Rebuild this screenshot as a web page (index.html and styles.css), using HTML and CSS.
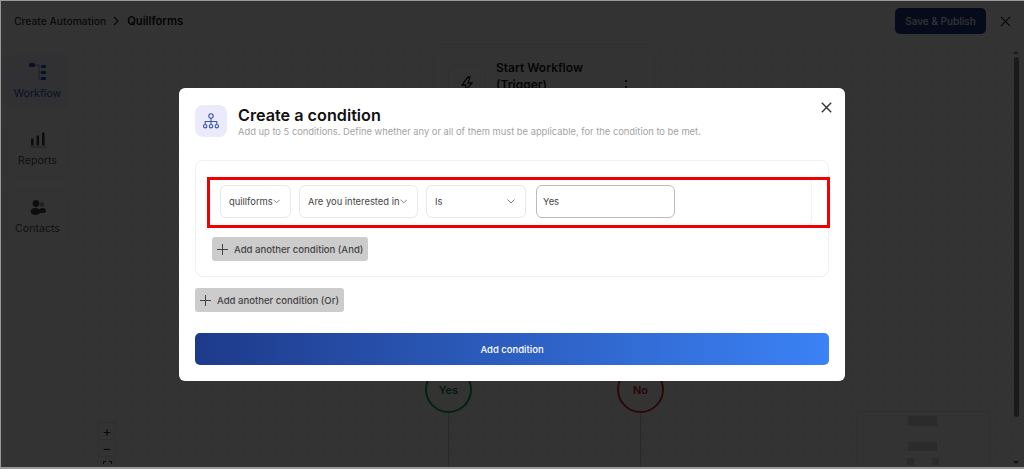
FILE: index.html
```html
<!DOCTYPE html>
<html lang="en">
<head>
    <meta charset="UTF-8">
    <meta name="viewport" content="width=device-width, initial-scale=1.0">
    <title>Create Automation</title>
    <link rel="stylesheet" href="styles.css">
</head>
<body>
    <div class="app">
        <header class="topbar">
            <div class="crumbs">
                <span class="crumb">Create Automation</span>
                <svg class="crumb-arrow" width="8" height="10" viewBox="0 0 8 10"><path d="M2 1l4 4-4 4" fill="none" stroke="#222" stroke-width="1.2"/></svg>
                <span class="crumb-current">Quillforms</span>
            </div>
            <div class="actions">
                <button class="publish">Save &amp; Publish</button>
                <svg width="11" height="11" viewBox="0 0 12 12"><path d="M1 1l10 10M11 1L1 11" stroke="#222" stroke-width="1.3"/></svg>
            </div>
        </header>
        <div class="main">
            <nav class="sidebar">
                <div class="side-item active">
                    <svg width="18" height="18" viewBox="0 0 18 18" fill="#2a4fb0"><rect x="0" y="0" width="6" height="4" rx="1"/><rect x="12" y="2" width="5" height="3" rx="1"/><rect x="12" y="8" width="5" height="3" rx="1"/><rect x="12" y="14" width="5" height="3" rx="1"/><path d="M6 2h4v14h2M10 9h2" fill="none" stroke="#2a4fb0" stroke-width=".6"/></svg>
                    <span>Workflow</span>
                </div>
                <div class="side-item">
                    <svg width="16" height="17" viewBox="0 0 16 16" fill="#444"><rect x="1" y="7" width="2.6" height="7"/><rect x="6.5" y="4" width="2.6" height="10"/><rect x="12" y="1" width="2.6" height="13"/><rect x="0" y="15" width="16" height="1" opacity=".5"/></svg>
                    <span>Reports</span>
                </div>
                <div class="side-item">
                    <svg width="16" height="17" viewBox="0 0 16 16" fill="#444"><circle cx="6" cy="4" r="3.4"/><circle cx="12" cy="5" r="2.4" opacity=".5"/><ellipse cx="5.5" cy="12" rx="5" ry="3.4"/><ellipse cx="12.5" cy="11" rx="3.4" ry="2.6"/></svg>
                    <span>Contacts</span>
                </div>
            </nav>
            <div class="canvas">
                <div class="node">
                    <div class="node-icon">
                        <svg width="14" height="16" viewBox="0 0 14 16"><path d="M8 1L2 9h4l-1 6 7-8H8l2-6z" fill="none" stroke="#222" stroke-width="1.3"/></svg>
                    </div>
                    <div class="node-title">Start Workflow (Trigger)</div>
                    <div class="node-more"></div>
                </div>
                <div class="branch yes">Yes</div>
                <div class="branch no">No</div>
                <div class="branch-line line-yes"></div>
                <div class="branch-line line-no"></div>
                <div class="zoom-tools">
                    <span>+</span>
                    <span>&minus;</span>
                    <span>
                        <svg width="9" height="9" viewBox="0 0 9 9"><path d="M.5 3V.5H3M6 .5h2.5V3M8.5 6v2.5H6M3 8.5H.5V6" fill="none" stroke="#333"/></svg>
                    </span>
                </div>
                <div class="minimap">
                    <i class="mini-a"></i>
                    <i class="mini-b"></i>
                    <i class="mini-c"></i>
                    <i class="mini-d"></i>
                </div>
                <div class="scrollbar"></div>
            </div>
        </div>
    </div>

    <div class="overlay">
        <div class="modal">
            <svg class="modal-close" width="11" height="11" viewBox="0 0 11 11"><path d="M.8.8l9.4 9.4M10.2.8L.8 10.2" stroke="#333" stroke-width="1.4"/></svg>
            <div class="modal-head">
                <div class="modal-icon">
                    <svg width="16" height="17" viewBox="0 0 16 17" fill="none" stroke="#3a56b0" stroke-width="1.1"><circle cx="8" cy="3" r="2.2"/><path d="M8 5.2v6M2.2 11V8.5h11.6V11"/><circle cx="2.2" cy="13.2" r="1.7"/><circle cx="8" cy="13.2" r="1.7"/><circle cx="13.8" cy="13.2" r="1.7"/></svg>
                </div>
                <div>
                    <h1>Create a condition</h1>
                    <p>Add up to 5 conditions. Define whether any or all of them must be applicable, for the condition to be met.</p>
                </div>
            </div>

            <div class="group">
                <div class="row">
                    <div class="field field-form">quillforms
                        <svg class="chev" width="8" height="5" viewBox="0 0 8 5"><path d="M.5.5L4 4 7.5.5" fill="none" stroke="#777"/></svg>
                    </div>
                    <div class="field field-question">Are you interested in
                        <svg class="chev" width="8" height="5" viewBox="0 0 8 5"><path d="M.5.5L4 4 7.5.5" fill="none" stroke="#777"/></svg>
                    </div>
                    <div class="field field-op">Is
                        <svg class="chev" width="8" height="5" viewBox="0 0 8 5"><path d="M.5.5L4 4 7.5.5" fill="none" stroke="#777"/></svg>
                    </div>
                    <div class="value">Yes</div>
                </div>
                <div class="highlight"></div>
                <button class="add-btn add-and">
                    <svg width="11" height="11" viewBox="0 0 11 11"><path d="M5.5 0v11M0 5.5h11" stroke="#444"/></svg>
                    Add another condition (And)
                </button>
            </div>

            <button class="add-btn add-or">
                <svg width="11" height="11" viewBox="0 0 11 11"><path d="M5.5 0v11M0 5.5h11" stroke="#444"/></svg>
                Add another condition (Or)
            </button>

            <button class="submit">Add condition</button>
        </div>
    </div>
</body>
</html>
```

FILE: styles.css
```css
* {
    box-sizing: border-box;
}

body {
    margin: 0;
    height: 100vh;
    overflow: hidden;
    padding: 1px 0 2px 1px;
    background-color: #999;
    font-family: Inter, "Liberation Sans", sans-serif;
    color: #222;
}

.app {
    height: 100%;
    display: flex;
    flex-direction: column;
    background-color: #fff;
}

.topbar {
    height: 44px;
    flex-shrink: 0;
    padding: 0 13px 3px 13px;
    display: flex;
    align-items: center;
    justify-content: space-between;
    border-bottom: 1px solid #f2f2f2;
}

.crumbs {
    display: flex;
    align-items: center;
    gap: 6px;
}

.crumb {
    font-size: 10.3px;
    font-weight: 500;
    color: #333;
}

.crumb-current {
    margin-left: 1px;
    font-size: 11.2px;
    font-weight: 600;
    color: #111;
}

.actions {
    display: flex;
    align-items: center;
    gap: 14px;
}

.publish {
    width: 91px;
    height: 26px;
    border: none;
    border-radius: 5px;
    background-color: #1e3a8a;
    color: #fff;
    font-family: inherit;
    font-size: 10px;
    font-weight: 500;
}

.main {
    flex: 1;
    display: flex;
    min-height: 0;
}

.sidebar {
    width: 74px;
    flex-shrink: 0;
    padding: 10px 6px;
    display: flex;
    flex-direction: column;
    gap: 14px;
    border-right: 1px solid #f2f2f2;
}

.side-item {
    height: 54px;
    padding-top: 7px;
    display: flex;
    flex-direction: column;
    align-items: center;
    gap: 6px;
    border: 1px solid #f2f2f2;
    border-radius: 6px;
    font-size: 10.6px;
    color: #555;
}

.side-item.active {
    background-color: #f2f5fc;
    color: #2a4fb0;
}

.canvas {
    flex: 1;
    position: relative;
    overflow: hidden;
    background-color: #fff;
    background-image: radial-gradient(circle, #cfcfcf .5px, transparent .9px);
    background-size: 16px 16px;
}

.node {
    position: absolute;
    left: 358px;
    top: 2px;
    width: 222px;
    height: 110px;
    padding: 11px 14px;
    display: flex;
    gap: 10px;
    background-color: #fff;
    border: 1px solid #eee;
    border-radius: 8px;
}

.node-icon {
    width: 38px;
    height: 38px;
    flex-shrink: 0;
    display: flex;
    align-items: center;
    justify-content: center;
    border: 1px solid #eee;
    border-radius: 6px;
    margin-top: 6px;
}

.node-title {
    width: 110px;
    font-size: 12px;
    font-weight: 600;
    line-height: 17px;
}

.node-more {
    position: absolute;
    right: 27px;
    top: 32px;
    width: 2px;
    height: 8px;
    border-top: 2px dotted #444;
    border-bottom: 2px dotted #444;
}

.branch {
    position: absolute;
    top: 321px;
    width: 47px;
    height: 47px;
    display: flex;
    align-items: center;
    justify-content: center;
    background-color: #fff;
    border: 2px solid;
    border-radius: 50%;
    font-size: 11px;
    font-weight: 600;
}

.branch.yes {
    left: 350px;
    border-color: #16a34a;
    color: #15803d;
}

.branch.no {
    left: 542px;
    border-color: #dc2626;
    color: #b91c1c;
}

.branch-line {
    position: absolute;
    top: 368px;
    bottom: 0;
    width: 1px;
    background-color: #ccc;
}

.line-yes {
    left: 373px;
}

.line-no {
    left: 565px;
}

.zoom-tools {
    position: absolute;
    left: 23px;
    top: 377px;
    width: 18px;
    display: flex;
    flex-direction: column;
    background-color: #fff;
    border: 1px solid #e8e8e8;
    color: #333;
    font-size: 14px;
    text-align: center;
}

.zoom-tools span {
    height: 17px;
    line-height: 15px;
    border-bottom: 1px solid #e8e8e8;
}

.minimap {
    position: absolute;
    left: 782px;
    top: 366px;
    width: 133px;
    height: 70px;
    background-color: #fff;
    border: 1px solid #e8e8e8;
}

.minimap i {
    position: absolute;
    background-color: #d8d8d8;
}

.mini-a {
    left: 50px;
    top: 4px;
    width: 29px;
    height: 10px;
}

.mini-b {
    left: 50px;
    top: 30px;
    width: 29px;
    height: 9px;
}

.mini-c {
    left: 49px;
    top: 46px;
    width: 7px;
    height: 7px;
}

.mini-d {
    left: 74px;
    top: 46px;
    width: 7px;
    height: 7px;
}

.scrollbar {
    position: absolute;
    right: 5px;
    top: 12px;
    width: 5px;
    height: 360px;
    border-radius: 3px;
    background-color: #808080;
}

.scrollbar::before,
.scrollbar::after {
    content: "";
    position: absolute;
    left: -1px;
    border-left: 3.5px solid transparent;
    border-right: 3.5px solid transparent;
}

.scrollbar::before {
    top: -6px;
    border-bottom: 3px solid #777;
}

.scrollbar::after {
    bottom: -47px;
    border-top: 3px solid #555;
}

.overlay {
    position: fixed;
    inset: 1px 0 2px 1px;
    padding: 1px 1px 0 0;
    display: flex;
    align-items: center;
    justify-content: center;
    background-color: rgba(0, 0, 0, 0.8);
}

.modal {
    position: relative;
    width: 666px;
    height: 293px;
    padding: 17px 16px 16px;
    background-color: #fff;
    border-radius: 6px;
}

.modal-close {
    position: absolute;
    right: 13px;
    top: 14px;
}

.modal-head {
    display: flex;
    gap: 11px;
    margin-bottom: 22px;
}

.modal-icon {
    width: 32px;
    height: 32px;
    flex-shrink: 0;
    display: flex;
    align-items: center;
    justify-content: center;
    background-color: #eaeafa;
    border-radius: 8px;
}

.modal-head h1 {
    margin: 0;
    font-size: 16.2px;
    line-height: 20px;
    font-weight: 600;
    color: #111;
}

.modal-head p {
    margin: 0;
    font-size: 9.36px;
    line-height: 13px;
    color: #a3a3a3;
}

.group {
    position: relative;
    height: 117px;
    padding: 17px 16px 0 12px;
    border: 1px solid #f0f0f0;
    border-radius: 8px;
}

.row {
    height: 48px;
    padding: 6px 12px;
    display: flex;
    gap: 8px;
    border: 1px solid #f3f3f3;
    border-radius: 6px;
    margin-left: -1px;
}

.field {
    height: 33px;
    padding: 0 10px 0 8px;
    display: flex;
    align-items: center;
    justify-content: space-between;
    white-space: nowrap;
    border: 1px solid #e8e8e8;
    border-radius: 6px;
    font-size: 9.4px;
    color: #444;
}

.field-form {
    width: 71px;
}

.field-question {
    width: 119px;
}

.field-op {
    width: 100px;
}

.value {
    width: 139px;
    height: 33px;
    margin-left: 2px;
    padding: 0 6px;
    display: flex;
    align-items: center;
    border: 1px solid #bbb;
    border-radius: 6px;
    font-size: 9.4px;
    color: #444;
}

.highlight {
    position: absolute;
    left: 11px;
    top: 16px;
    width: 623px;
    height: 51px;
    border: 3px solid #f00000;
    pointer-events: none;
}

.add-btn {
    height: 24px;
    padding: 0 5px;
    display: flex;
    align-items: center;
    gap: 6px;
    border: none;
    border-radius: 3px;
    background-color: #ccc;
    color: #444;
    font-family: inherit;
    font-size: 9.55px;
    font-weight: 500;
}

.add-and {
    margin: 11px 0 0 4px;
}

.add-or {
    margin-top: 11px;
}

.submit {
    display: block;
    width: 100%;
    height: 32px;
    margin-top: 21px;
    border: none;
    border-radius: 5px;
    background-image: linear-gradient(90deg, #1e3a8a, #3b82f6);
    color: #fff;
    font-family: inherit;
    font-size: 9.5px;
    font-weight: 500;
}
```
